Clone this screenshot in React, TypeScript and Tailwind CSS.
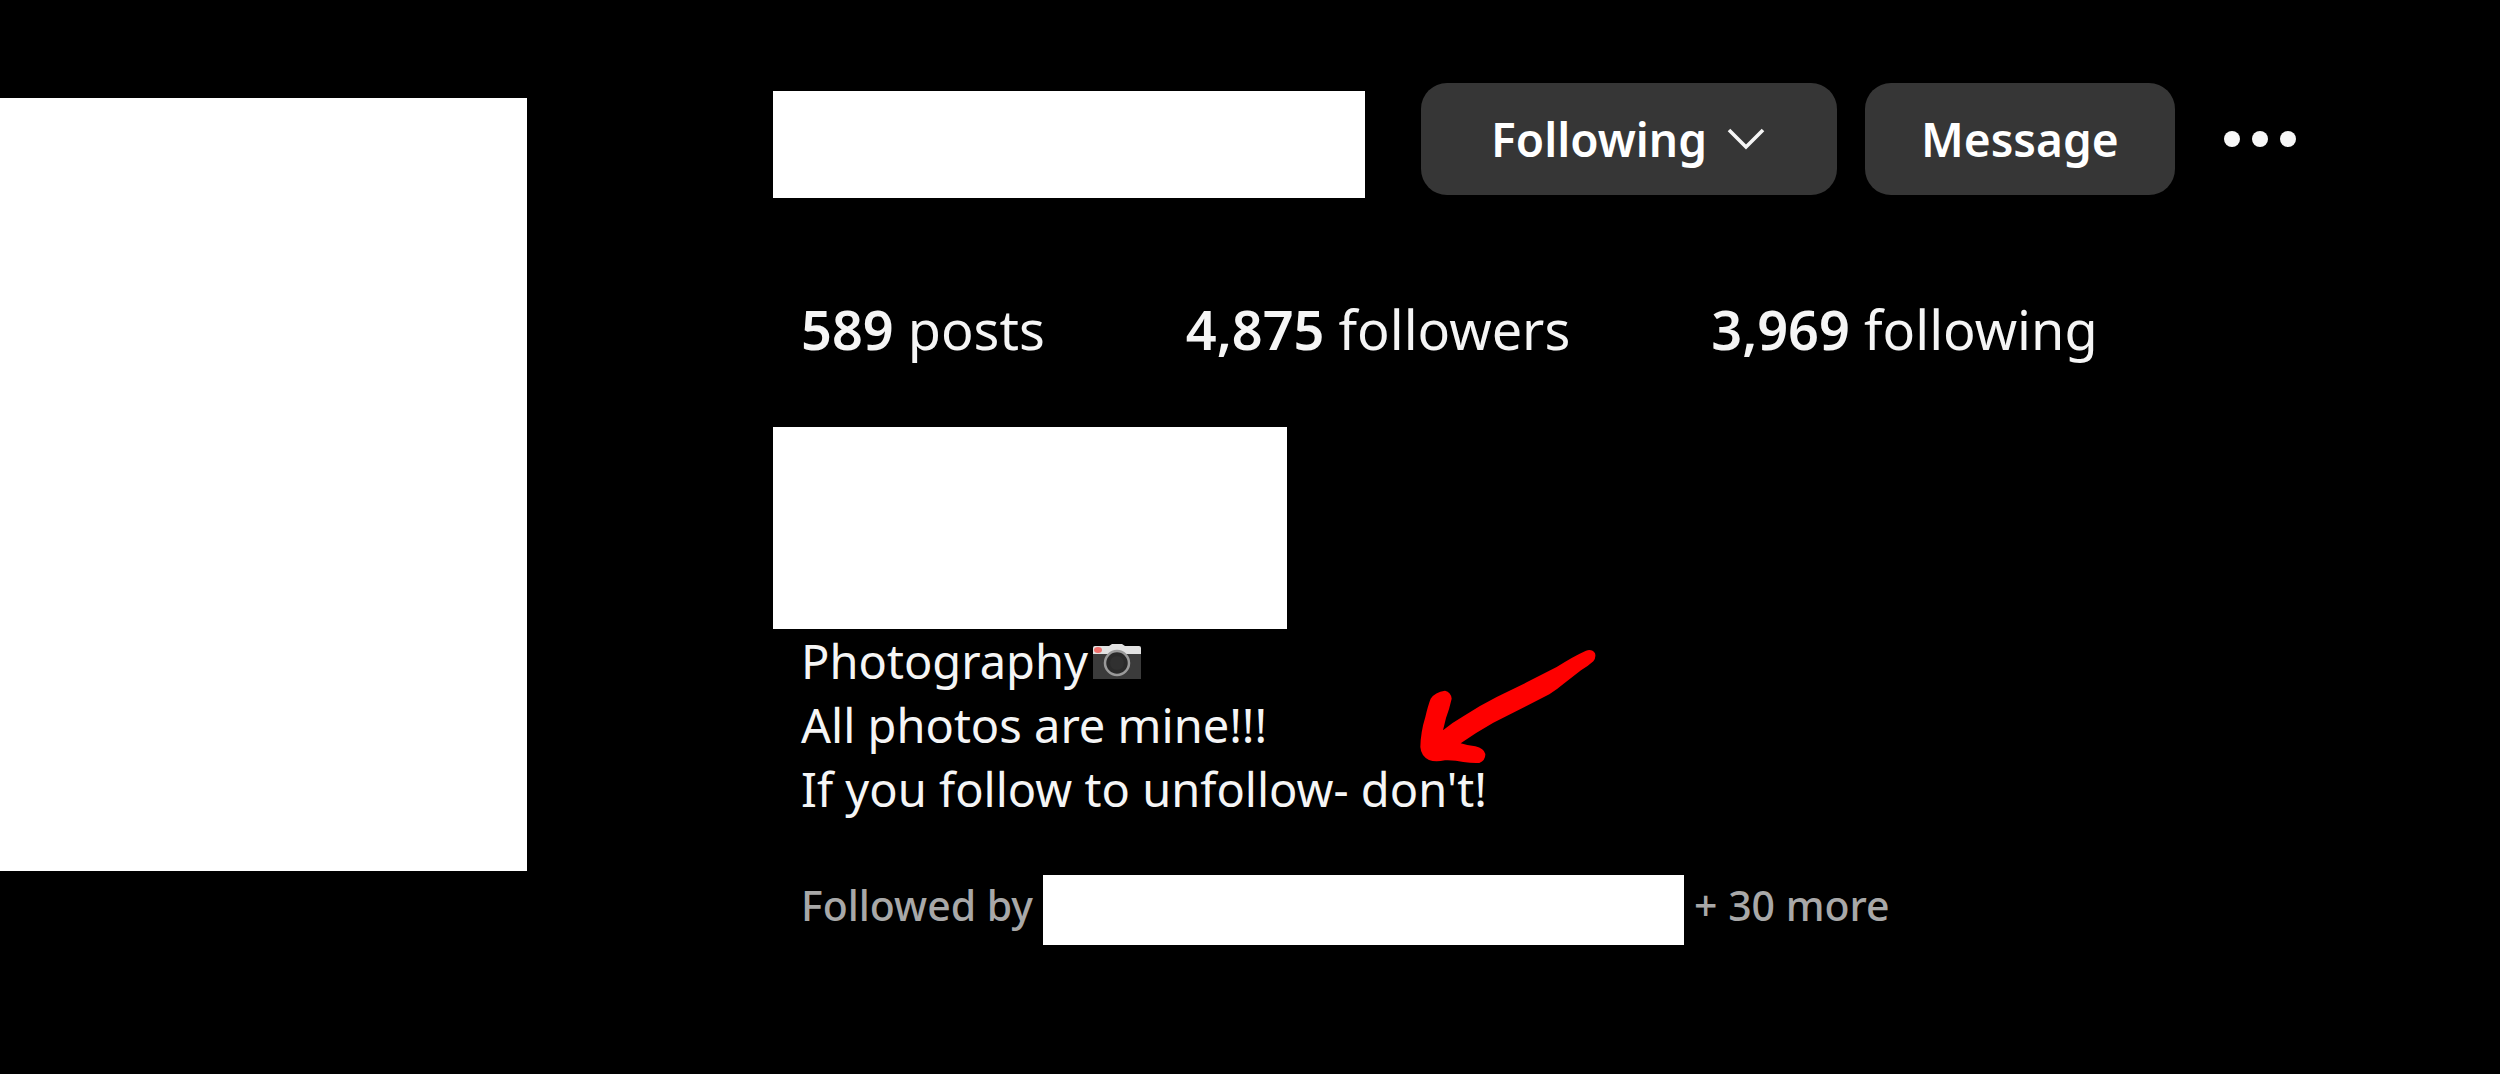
const stats = [
  { value: "589", label: "posts" },
  { value: "4,875", label: "followers" },
  { value: "3,969", label: "following" },
];

function ChevronDown() {
  return (
    <svg width="38" height="24" viewBox="0 0 38 24" fill="none" aria-hidden="true">
      <path d="M2 3 L19 20 L36 3" stroke="#f5f5f5" strokeWidth="3.6" />
    </svg>
  );
}

function MoreDots() {
  return (
    <svg width="74" height="18" viewBox="0 0 74 18" fill="#f7f7f7" aria-hidden="true">
      <circle cx="9" cy="9" r="8" />
      <circle cx="37" cy="9" r="8" />
      <circle cx="65" cy="9" r="8" />
    </svg>
  );
}

function Camera() {
  return (
    <svg width="50" height="37" viewBox="0 0 50 37" role="img" aria-label="camera">
      <path d="M1 10H49V36H1Z" fill="#3b3b3b" />
      <path d="M1 11V5Q1 3 3 3H17L20 1H30L33 3H47Q49 3 49 5V11Z" fill="#e2e2e2" />
      <ellipse cx="6" cy="7" rx="4" ry="3" fill="#f0706c" />
      <circle cx="25" cy="20" r="12" fill="#2a2a2a" stroke="#9a9a9a" strokeWidth="2.5" />
      <circle cx="25" cy="20" r="7" fill="#303030" />
    </svg>
  );
}

function Arrow() {
  return (
    <svg
      className="absolute left-[642px] top-[18px] w-[185px]"
      viewBox="645 75 555 360"
      fill="#fe0000"
      aria-hidden="true"
    >
      <path d="M1158 86 Q1176 80 1185 94 Q1189 106 1180 118 Q1165 132 1143 145 L1090 186 Q1070 203 1048 217 L975 254 L880 302 Q830 330 782 364 Q800 370 826 373 Q852 379 856 396 Q857 415 838 423 Q815 424 790 420 Q765 414 735 415 Q705 421 687 414 Q663 402 661 375 Q662 330 676 285 Q684 250 692 230 Q705 210 735 206 Q753 210 755 230 Q748 262 738 288 L729 325 Q760 300 790 283 Q840 250 890 225 L980 181 L1070 135 Q1120 103 1158 86Z" />
    </svg>
  );
}

export default function App() {
  return (
    <main className="flex min-h-screen bg-black font-['Noto_Sans','Open_Sans',sans-serif] text-[#f5f5f5]">
      <div className="mt-[98px] h-[773px] w-[527px] shrink-0 bg-white" />

      <section className="ml-[246px] grow pt-[83px]">
        <header className="flex items-start">
          <div className="mt-2 h-[107px] w-[592px] bg-white" />
          <div className="ml-14 flex items-center">
            <button
              type="button"
              className="flex h-28 items-center gap-5 rounded-[26px] bg-[#363636] pl-[70px] pr-[72px] text-[46px] font-semibold text-white"
            >
              Following
              <ChevronDown />
            </button>
            <button
              type="button"
              className="ml-7 h-28 rounded-[26px] bg-[#363636] px-14 text-[46px] font-semibold text-white"
            >
              Message
            </button>
            <button type="button" aria-label="More options" className="ml-12">
              <MoreDots />
            </button>
          </div>
        </header>

        <ul className="mt-[99px] flex gap-[141px] pl-7 text-[54px] leading-[64px]">
          {stats.map((s) => (
            <li key={s.label}>
              <span className="font-semibold">{s.value}</span> {s.label}
            </li>
          ))}
        </ul>

        <div className="mt-[66px] h-[202px] w-[514px] bg-white" />

        <div className="relative pl-7 text-[47px] leading-[64px]">
          <p className="flex items-center gap-1">
            Photography
            <Camera />
          </p>
          <p>All photos are mine!!!</p>
          <p>If you follow to unfollow- don't!</p>
          <Arrow />
        </div>

        <div className="mt-[54px] flex gap-[10px] pl-7 text-[41px] font-medium leading-[60px] text-[#a8a8a8]">
          <span>Followed by</span>
          <div className="h-[70px] w-[641px] bg-white" />
          <span>+ 30 more</span>
        </div>
      </section>
    </main>
  );
}
